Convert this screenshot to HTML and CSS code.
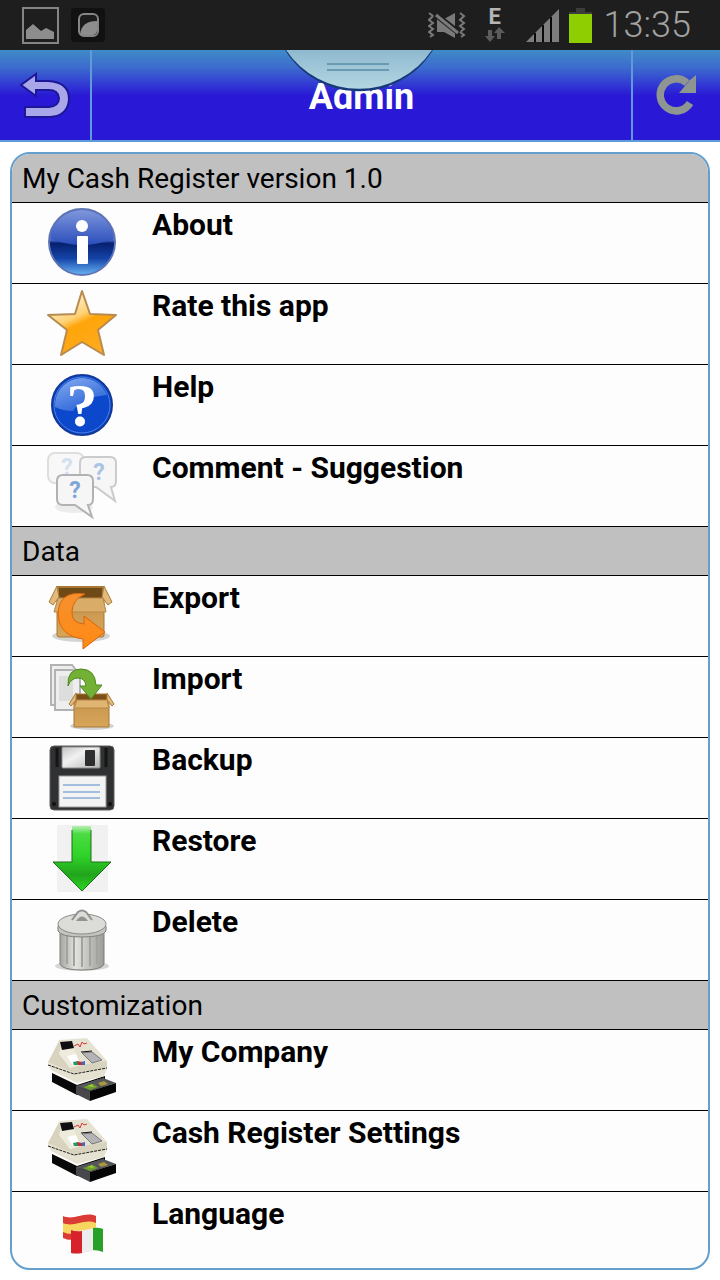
FILE: index.html
```
<!DOCTYPE html>
<html lang="en">

<head>
    <meta charset="UTF-8">
    <meta name="viewport" content="width=device-width, initial-scale=1.0">
    <title>Admin</title>
    <link rel="stylesheet" href="styles.css">
</head>

<body>

    <div class="status-bar">
        <svg class="status-picture" width="38" height="38" viewBox="0 0 38 38">
            <rect x="2" y="2" width="35" height="35" fill="none" stroke="#858585" stroke-width="2" />
            <path d="M5 33V24L12 18L20 25L25 22L33 26V33Z" fill="#8d8d8d" />
        </svg>
        <svg class="status-app" width="34" height="34" viewBox="0 0 34 34">
            <rect width="34" height="34" rx="3" fill="#111" />
            <rect x="8" y="6" width="19" height="22" rx="5" fill="#1c1c1c" stroke="#858585" stroke-width="2" />
            <path d="M9 27C10 17 16 13 26 13V22Q26 27 21 27Z" fill="#8d8d8d" />
        </svg>
        <svg class="status-mute" width="38" height="30" viewBox="0 0 38 30">
            <g fill="none" stroke="#7a7a7a" stroke-width="2">
                <path d="M1 3L5 6L1 10L5 13L1 16L5 19L1 22L5 25L2 27" />
                <path d="M32 3L36 6L32 10L36 13L32 16L36 19L32 22L36 25L33 27" />
            </g>
            <path d="M9 9H16L27 3V28L16 22H9Z" fill="#7a7a7a" />
            <path d="M7 4L31 23" stroke="#1e1e1e" stroke-width="6" />
            <path d="M8 5L30 23" stroke="#7a7a7a" stroke-width="3" />
        </svg>
        <div class="network">
            <span>E</span>
            <svg width="20" height="16" viewBox="0 0 20 16">
                <path d="M3 3H7V9H10L5 15L0 9H3Z M12 12H16V6H20L14 0L9 6H12Z" fill="#5c5c5c" />
            </svg>
        </div>
        <svg class="status-signal" width="34" height="34" viewBox="0 0 34 34">
            <path d="M0 34L33 1V34Z" fill="#7d7d7d" />
            <path d="M9 25V34M17 17V34M25 9V34" stroke="#0a0a0a" stroke-width="2" />
        </svg>
        <svg class="status-battery" width="23" height="35" viewBox="0 0 23 35">
            <path d="M7 0H16V4H23V7H0V4H7Z" fill="#3c3c3c" />
            <rect y="6" width="23" height="29" fill="#8fce00" />
        </svg>
        <time class="clock">13:35</time>
    </div>

    <header class="title-bar">
        <button class="bar-button" type="button" aria-label="Back">
            <svg width="52" height="48" viewBox="0 0 52 48">
                <path d="M2 14L17 3V10H29Q50 11 50 28Q49 45 31 46H6V36H30Q40 35 40 27Q39 19 30 19H17V25Z"
                    fill="#aaa6ea" stroke="#1c1797" stroke-width="2" />
            </svg>
        </button>
        <h1>Admin</h1>
        <button class="bar-button refresh" type="button" aria-label="Refresh">
            <svg width="42" height="42" viewBox="0 0 42 42">
                <path d="M34 29A16 16 0 1 1 31 9" fill="none" stroke="#8f9691" stroke-width="7.500" />
                <path d="M40 1V19H23L34 6Z" fill="#8f9691" />
            </svg>
        </button>
        <svg class="pull-tab" width="150" height="44" viewBox="0 0 150 44">
            <defs>
                <linearGradient id="tab" x2="0" y2="1">
                    <stop offset="0" stop-color="#8fb9cf" />
                    <stop offset="1" stop-color="#b4d6e2" />
                </linearGradient>
            </defs>
            <path d="M1 0A87 87 0 0 0 149 0Z" fill="#163a78" />
            <path d="M2 0A88 88 0 0 0 148 0Z" fill="url(#tab)" />
            <path d="M43 14H105M43 20H105" stroke="#6a9bb3" stroke-width="2" />
        </svg>
    </header>

    <main class="panel">
        <h2>My Cash Register version 1.0</h2>
        <ul>
            <li><a href="#about">
                <svg width="70" height="70" viewBox="0 0 70 70">
                    <defs>
                        <linearGradient id="info" x2="0" y2="1">
                            <stop offset="0" stop-color="#3c56b4" />
                            <stop offset=".47" stop-color="#4569cf" />
                            <stop offset=".52" stop-color="#06206f" />
                            <stop offset=".75" stop-color="#1544a8" />
                            <stop offset="1" stop-color="#69b5f4" />
                        </linearGradient>
                        <linearGradient id="info-gloss" x2="0" y2="1">
                            <stop offset="0" stop-color="#7f97dc" />
                            <stop offset="1" stop-color="#2a4dbb" />
                        </linearGradient>
                    </defs>
                    <circle cx="35" cy="35" r="33" fill="url(#info)" stroke="#5f74b4" stroke-width="2" />
                    <path d="M4 32A31 29 0 0 1 66 32Q50 38 35 38T4 32Z" fill="url(#info-gloss)" />
                    <circle cx="35" cy="19" r="6" fill="#fff" />
                    <rect x="30" y="29" width="11" height="28" rx="1" fill="#fff" />
                </svg>
                <span>About</span></a></li>
            <li><a href="#rate">
                <svg width="70" height="70" viewBox="0 0 70 70">
                    <defs>
                        <linearGradient id="star" x1=".2" x2=".7" y2="1">
                            <stop offset=".1" stop-color="#fff1d0" />
                            <stop offset=".4" stop-color="#ffd276" />
                            <stop offset=".52" stop-color="#ffa50a" />
                            <stop offset="1" stop-color="#ffab20" />
                        </linearGradient>
                    </defs>
                    <path d="M35 3L43 26L69 27L51 42L57 67L35 54L14 67L20 42L1 27L28 26Z" fill="url(#star)"
                        stroke="#b88b50" stroke-width="2" stroke-linejoin="round" />
                </svg>
                <span>Rate this app</span></a></li>
            <li><a href="#help">
                <svg width="70" height="70" viewBox="0 0 70 70">
                    <defs>
                        <linearGradient id="help-gloss" x2=".6" y2="1">
                            <stop offset="0" stop-color="#86adf0" />
                            <stop offset="1" stop-color="#2a63d8" />
                        </linearGradient>
                    </defs>
                    <circle cx="35" cy="36" r="30" fill="#0b48cc" stroke="#12389b" stroke-width="2" />
                    <path d="M8 38A27 27 0 0 1 60 26Q35 28 26 42Q16 42 8 38Z" fill="url(#help-gloss)" />
                    <circle cx="35" cy="36" r="28" fill="none" stroke="#4c80e2" />
                    <text class="help-mark" x="35" y="57">?</text>
                </svg>
                <span>Help</span></a></li>
            <li><a href="#comment">
                <svg width="70" height="70" viewBox="0 0 70 70">
                    <ellipse cx="27" cy="57" rx="19" ry="6" fill="#ececec" />
                    <rect x="1" y="3" width="36" height="30" rx="7" fill="#f8f8f8" stroke="#dedede" stroke-width="2" />
                    <text class="bubble-mark faint" x="20" y="25">?</text>
                    <path d="M39 7H63Q69 7 69 13V31Q69 37 64 37L68 51L49 37H39Q33 37 33 31V13Q33 7 39 7Z"
                        fill="#f6f6f6" stroke="#cbcbcb" stroke-width="2" />
                    <text class="bubble-mark" x="52" y="30">?</text>
                    <path d="M16 25H40Q46 25 46 31V49Q46 55 41 55L45 67L28 55H16Q10 55 10 49V31Q10 25 16 25Z"
                        fill="#f6f6f6" stroke="#b2b2b2" stroke-width="2" />
                    <text class="bubble-mark strong" x="28" y="48">?</text>
                </svg>
                <span>Comment - Suggestion</span></a></li>
        </ul>

        <h2>Data</h2>
        <ul>
            <li><a href="#export">
                <svg width="70" height="70" viewBox="0 0 70 70">
                    <defs>
                        <linearGradient id="carton" x2="0" y2="1">
                            <stop offset="0" stop-color="#c4924a" />
                            <stop offset="1" stop-color="#d8a65a" />
                        </linearGradient>
                        <linearGradient id="orange" x2="0" y2="1">
                            <stop offset="0" stop-color="#f6902e" />
                            <stop offset="1" stop-color="#ff8a14" />
                        </linearGradient>
                    </defs>
                    <ellipse cx="34" cy="56" rx="29" ry="6" fill="#d4d4d4" />
                    <path d="M10 18H57V55Q57 57 55 57H12Q10 57 10 55Z" fill="url(#carton)" stroke="#a97834" />
                    <path d="M11 7H56V19H11Z" fill="#6f4a16" stroke="#a97834" stroke-width="2" />
                    <path d="M10 6L12 17L6 25L2 22Z M57 6L55 17L61 25L65 22Z" fill="#e2bb7c" stroke="#ab7c3c" />
                    <path d="M11 18H56L59 32H7Z" fill="#d9ac68" stroke="#b88748" />
                    <path d="M38 14Q12 10 11 34Q12 56 36 59V69L58 52L37 36V44Q24 43 25 31Q26 19 38 14Z"
                        fill="url(#orange)" stroke="#d8660e" />
                </svg>
                <span>Export</span></a></li>
            <li><a href="#import">
                <svg width="70" height="70" viewBox="0 0 70 70">
                    <ellipse cx="45" cy="65" rx="22" ry="4" fill="#d4d4d4" />
                    <path d="M4 4H25L29 9V44H4Z" fill="#eee" stroke="#b2b2b2" stroke-width="2" />
                    <path d="M8 9H26L33 16V49H8Z" fill="#eee" stroke="#b2b2b2" stroke-width="2" />
                    <path d="M12 15H26V40H12Z" fill="#dcdedc" />
                    <path d="M27 36H62V66H27Z" fill="url(#carton)" stroke="#a97834" />
                    <path d="M29 33H60V41H29Z" fill="#7b5118" stroke="#a97834" />
                    <path d="M29 32V39L24 45L22 43Z M60 32V39L65 45L67 43Z" fill="#e2bb7c" stroke="#ab7c3c" />
                    <path d="M30 39H60L62 47H27Z" fill="#e0b572" stroke="#b88748" />
                    <path d="M21 25Q20 8 34 8Q48 8 49 24H55L44 38L33 25H39Q38 17 31 17Q24 17 21 25Z" fill="#73b036"
                        stroke="#4e8a20" />
                </svg>
                <span>Import</span></a></li>
            <li><a href="#backup">
                <svg width="70" height="70" viewBox="0 0 70 70">
                    <defs>
                        <linearGradient id="metal" x2="1" y2="1">
                            <stop offset="0" stop-color="#c2c2c2" />
                            <stop offset=".4" stop-color="#f1f1f1" />
                            <stop offset="1" stop-color="#b3b3b3" />
                        </linearGradient>
                    </defs>
                    <rect x="3" y="4" width="64" height="64" rx="4" fill="#303133" stroke="#5c5c5c" />
                    <path d="M10 6V25M59 6V25" stroke="#151515" stroke-width="3" />
                    <rect x="15" y="5" width="38" height="21" rx="1" fill="url(#metal)" stroke="#8d8d8d" />
                    <rect x="38" y="8" width="10" height="16" rx="1" fill="#2d2e30" />
                    <rect x="12" y="34" width="47" height="31" fill="#f3f3f3" stroke="#9b9b9b" />
                    <path d="M16 43H53M16 50H53M16 56H53" stroke="#a3bedc" stroke-width="2" />
                    <circle cx="7" cy="62" r="2" fill="#111" />
                    <circle cx="63" cy="62" r="2" fill="#111" />
                </svg>
                <span>Backup</span></a></li>
            <li><a href="#restore">
                <svg width="70" height="70" viewBox="0 0 70 70">
                    <defs>
                        <linearGradient id="down" x2="0" y2="1">
                            <stop offset="0" stop-color="#b8f0b4" />
                            <stop offset=".12" stop-color="#4bdc42" />
                            <stop offset=".45" stop-color="#2fd428" />
                            <stop offset=".75" stop-color="#22a41c" />
                            <stop offset="1" stop-color="#2bd920" />
                        </linearGradient>
                    </defs>
                    <rect x="10" y="2" width="51" height="67" rx="2" fill="#f1f1f1" />
                    <path d="M25 3H44V39H64L35 68L6 39H25Z" fill="url(#down)" />
                    <path d="M25 7V39H6L35 68L64 39H44V7" fill="none" stroke="#1f6c1b" />
                </svg>
                <span>Restore</span></a></li>
            <li><a href="#delete">
                <svg width="70" height="70" viewBox="0 0 70 70">
                    <defs>
                        <linearGradient id="can">
                            <stop offset="0" stop-color="#a5a6a2" />
                            <stop offset=".35" stop-color="#e2e3df" />
                            <stop offset="1" stop-color="#9b9c98" />
                        </linearGradient>
                    </defs>
                    <ellipse cx="35" cy="62" rx="27" ry="5" fill="#d5d5d5" />
                    <path d="M13 26H57V60Q55 66 35 66T13 60Z" fill="url(#can)" stroke="#7e7f7b" />
                    <path d="M20 32V60M27 33V62M35 33V63M43 33V62M50 32V60" stroke="#a2a39f" stroke-width="2" />
                    <path d="M11 22V27Q14 33 35 33T59 27V22Z" fill="#c3c4c0" stroke="#7e7f7b" />
                    <ellipse cx="35" cy="20" rx="24" ry="10" fill="#dcddd9" stroke="#8b8c88" />
                    <path d="M25 16L31 8Q35 5 39 8L45 16" fill="#dcddd9" stroke="#92938f" stroke-width="2" />
                    <path d="M29 17Q35 8 41 17Z" fill="#92938f" />
                </svg>
                <span>Delete</span></a></li>
        </ul>

        <h2>Customization</h2>
        <ul>
            <li><a href="#company">
                <svg width="70" height="70" viewBox="0 0 70 70">
                    <g id="register">
                        <path d="M5 39L30 51L58 42V52L30 61L5 48Z" fill="#080808" />
                        <path d="M12 6L40 4L60 27V35L57 42L30 49L4 36L1 29Z" fill="#e6e2d1" />
                        <path d="M12 8L1 28L27 39L60 34V27L35 31L22 34Z" fill="#d8d3bf" />
                        <path d="M14 13L27 15L34 31L23 34L12 20Z" fill="#eeebdd" />
                        <path d="M13 8L25 7L27 14L15 16Z" fill="#0d0d14" />
                        <path d="M27 12L31 10L33 13L35 8L37 10L40 9" fill="none" stroke="#d93636" />
                        <path d="M20 22L29 20L32 28L25 30Z" fill="#fff" />
                        <path d="M26 28L31 27V31H27Z" fill="#1c9c6c" />
                        <path d="M30 27L35 28V31H31Z" fill="#c72b2b" />
                        <path d="M34 28L38 27V31H35Z" fill="#4c64b8" />
                        <path d="M35 19L45 18L55 26L45 29Z" fill="#b4b4b6" stroke="#77777a" />
                        <path d="M34 18L45 17" stroke="#111" />
                        <path d="M1 31L27 40L60 34" fill="none" stroke="#1b1b1b" stroke-dasharray="3 1" />
                        <path d="M30 53L57 44" fill="none" stroke="#f0f0f0" stroke-dasharray="1 2" />
                        <path d="M29 52L56 44L69 49L43 57Z" fill="#55555a" />
                        <path d="M36 53L46 50L51 53L43 56Z" fill="#6f9f2b" />
                        <path d="M40 52L45 50L47 53Z" fill="#99cc31" />
                        <path d="M51 49L57 47L61 50L54 52Z" fill="#a79a3e" />
                        <path d="M29 52L43 57V67L29 60Z" fill="#47474c" />
                        <path d="M43 57L69 49V58L43 67Z" fill="#050505" />
                    </g>
                </svg>
                <span>My Company</span></a></li>
            <li><a href="#settings">
                <svg width="70" height="70" viewBox="0 0 70 70">
                    <use href="#register" />
                </svg>
                <span>Cash Register Settings</span></a></li>
            <li><a href="#language">
                <svg width="70" height="70" viewBox="0 0 70 70">
                    <path d="M16 20C27 25 37 15 49 20V42C37 37 28 48 16 42Z" fill="#dc3a34" />
                    <path d="M16 27C27 32 37 22 49 27V36C37 31 28 42 16 36Z" fill="#f8d660" />
                    <path d="M24 34C35 38 45 29 56 33V56C45 52 36 60 24 57Z" fill="#efecef" />
                    <path d="M24 34Q29 36 35 35V57Q29 58 24 57Z" fill="#d8222b" />
                    <path d="M46 32Q51 31 56 33V56Q51 54 46 54Z" fill="#27a028" />
                </svg>
                <span>Language</span></a></li>
        </ul>
    </main>

</body>

</html>
```
FILE: styles.css
```
* {
    box-sizing: border-box;
}

body {
    margin: 0;
    background-color: #fff;
    color: #000;
    font-family: Roboto, "Noto Sans", sans-serif;
}

svg {
    display: block;
    flex: none;
}

.status-bar {
    display: flex;
    align-items: center;
    height: 50px;
    padding: 0 29px 0 21px;
    background-color: #1e1e1e;
}

.status-app {
    margin-left: 12px;
}

.status-mute {
    margin-left: auto;
}

.network {
    display: flex;
    flex-direction: column;
    align-items: center;
    width: 22px;
    margin: 0 20px 0 18px;
    color: #b5b5b5;
    font-size: 22px;
    font-weight: bold;
    line-height: 20px;
}

.status-battery {
    margin: 0 12px 0 9px;
}

.clock {
    color: #a2a2a2;
    font-size: 36px;
    font-weight: 300;
    line-height: 50px;
}

.title-bar {
    position: relative;
    display: flex;
    height: 92px;
    border-bottom: 2px solid #619ad8;
    background: linear-gradient(#3f8bc8, #3c6ace 18px, #2918d6 46px);
}

.title-bar h1 {
    flex: 1;
    margin: 0;
    color: #fff;
    font-size: 36px;
    line-height: 94px;
    text-align: center;
}

.bar-button {
    display: flex;
    align-items: center;
    justify-content: center;
    width: 92px;
    padding: 0;
    border: 0;
    border-right: 2px solid #619ad8;
    background: none;
    cursor: pointer;
}

.refresh {
    width: 89px;
    border-right: 0;
    border-left: 2px solid #619ad8;
}

/* Handle hanging over the title */
.pull-tab {
    position: absolute;
    top: 0;
    left: 50%;
    margin-left: -76px;
}

.panel {
    margin: 10px;
    overflow: hidden;
    border: 2px solid #659fcd;
    border-radius: 20px;
    background-color: #fdfdfd;
}

.panel h2 {
    margin: 0;
    padding: 2px 10px 0;
    background-color: #c0c0c0;
    font-size: 28px;
    font-weight: normal;
    line-height: 46px;
}

.panel ul {
    margin: 0;
    padding: 0;
    border-bottom: 1px solid #000;
    list-style: none;
}

.panel ul:last-child {
    border-bottom: 0;
}

.panel li {
    border-top: 1px solid #000;
}

.panel a {
    display: flex;
    gap: 35px;
    height: 80px;
    padding: 4px 10px 0 35px;
    color: #000;
    font-size: 30px;
    font-weight: bold;
    line-height: 36px;
    text-decoration: none;
}

.panel ul:last-child li:last-child a {
    height: 76px;
}

.help-mark {
    fill: #fff;
    font-family: "Liberation Serif", serif;
    font-size: 62px;
    font-weight: bold;
    text-anchor: middle;
}

.bubble-mark {
    fill: #a9c3e4;
    font-size: 23px;
    font-weight: bold;
    text-anchor: middle;
}

.bubble-mark.faint {
    fill: #d3e0ef;
}

.bubble-mark.strong {
    fill: #7da5d6;
}
```
